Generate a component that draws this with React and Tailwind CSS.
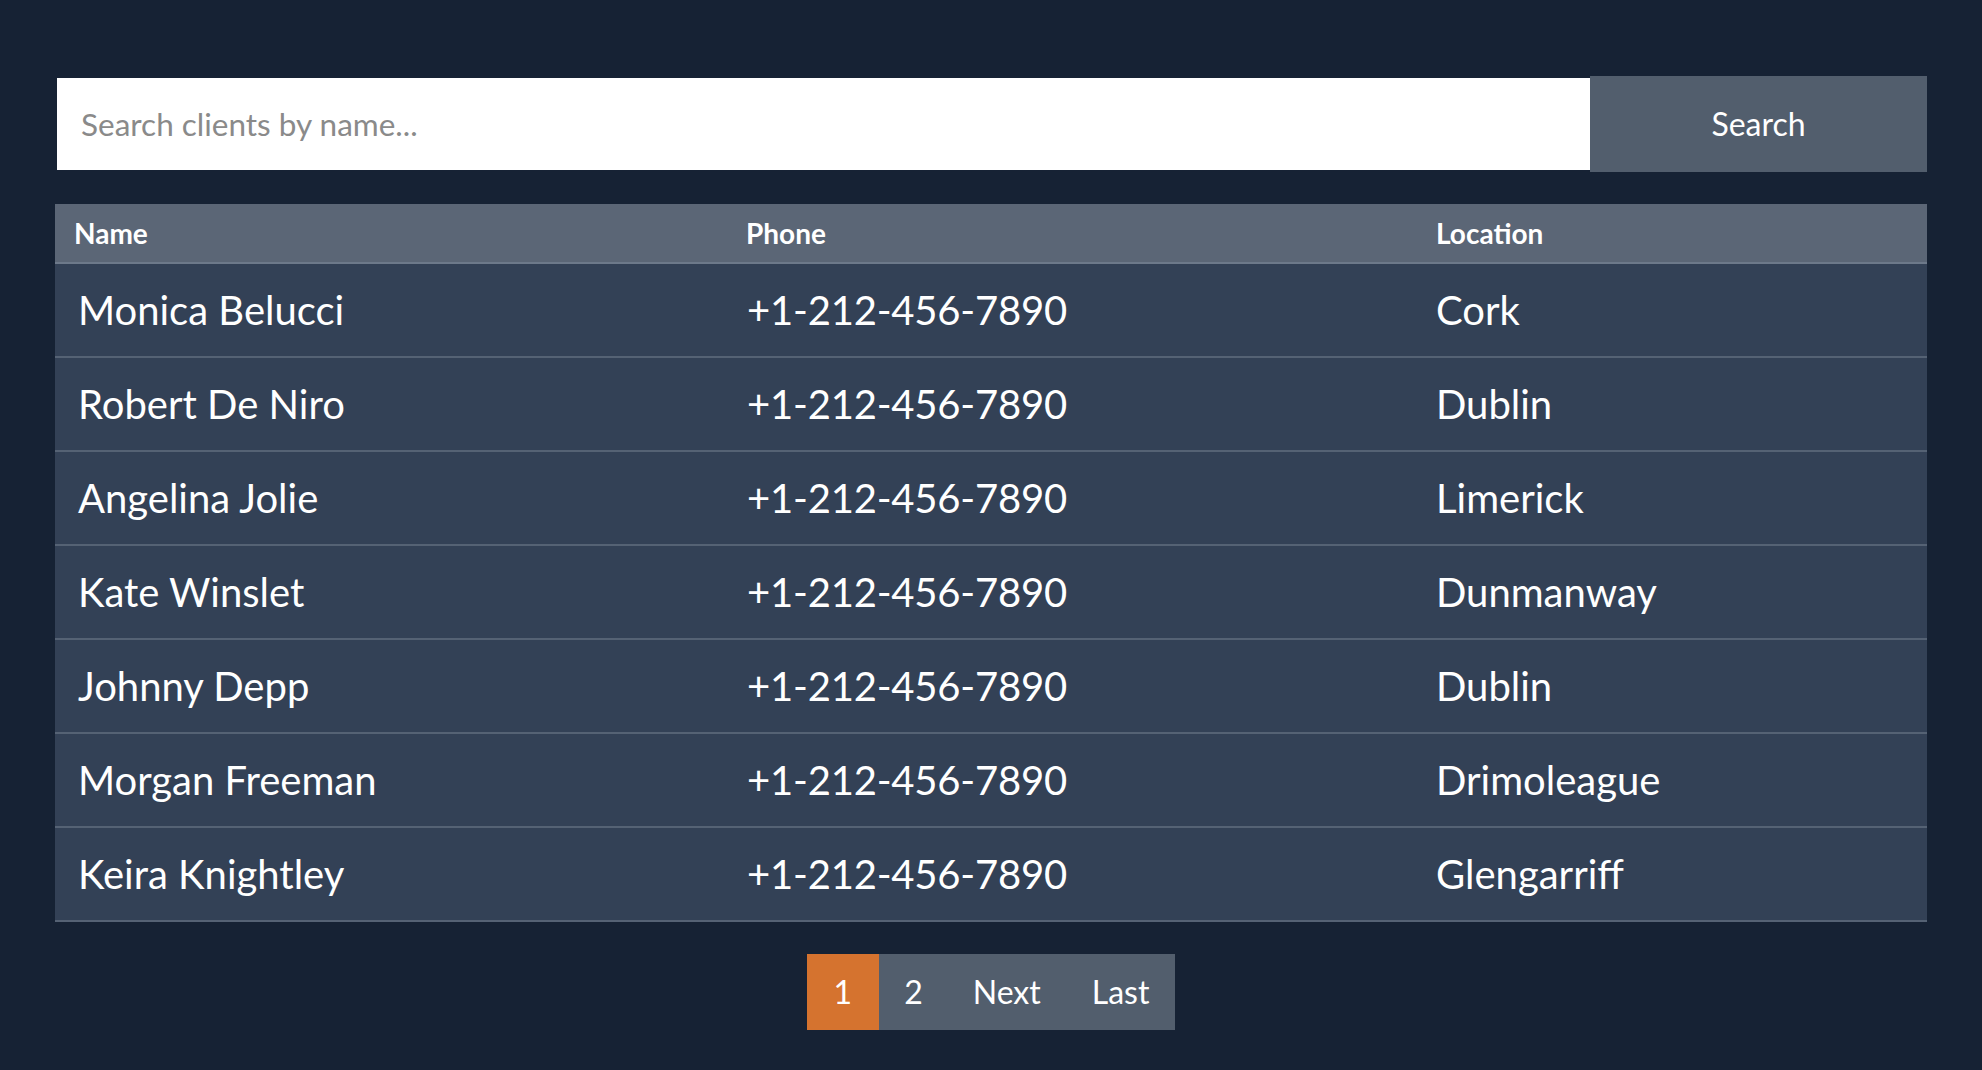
import React from 'react';

const clients = [
  { name: 'Monica Belucci', phone: '+1-212-456-7890', location: 'Cork' },
  { name: 'Robert De Niro', phone: '+1-212-456-7890', location: 'Dublin' },
  { name: 'Angelina Jolie', phone: '+1-212-456-7890', location: 'Limerick' },
  { name: 'Kate Winslet', phone: '+1-212-456-7890', location: 'Dunmanway' },
  { name: 'Johnny Depp', phone: '+1-212-456-7890', location: 'Dublin' },
  { name: 'Morgan Freeman', phone: '+1-212-456-7890', location: 'Drimoleague' },
  { name: 'Keira Knightley', phone: '+1-212-456-7890', location: 'Glengarriff' },
];

export default function App() {
  return (
    <div className="min-h-screen bg-[#162234] px-[55px] pt-[76px] pb-10 text-white font-['Lato',_'Noto_Sans',_sans-serif]">
      {/* SEARCH */}
      <form className="flex items-center" onSubmit={(e) => e.preventDefault()}>
        <input
          type="text"
          placeholder="Search clients by name..."
          className="ml-[2px] h-[92px] flex-1 bg-white px-[24px] text-[31.5px] text-gray-800 placeholder:text-[#8a8a8a] outline-none"
        />
        <button type="submit" className="h-[96px] w-[337px] bg-[#525e6d] text-[32px] text-white">
          Search
        </button>
      </form>

      {/* TABLE */}
      <div className="mt-[32px]">
        <div className="grid h-[60px] grid-cols-[673px_689px_1fr] items-center border-b-2 border-[#6d798a] bg-[#5b6676] text-[28px] font-bold">
          <div className="px-[19px]">Name</div>
          <div className="px-[18px]">Phone</div>
          <div className="px-[19px]">Location</div>
        </div>
        {clients.map((c) => (
          <div
            key={c.name + c.location}
            className="grid h-[94px] grid-cols-[673px_689px_1fr] items-center border-b-2 border-[#556274] bg-[#334156] text-[40px]"
          >
            <div className="px-[23px]">{c.name}</div>
            <div className="px-[19px] tracking-[-0.2px]">{c.phone}</div>
            <div className="px-[19px]">{c.location}</div>
          </div>
        ))}
      </div>

      {/* PAGINATION */}
      <div className="mt-[32px] flex justify-center">
        <div className="flex h-[76px] items-stretch bg-[#525e6d] text-[32px]">
          <button className="bg-[#d5732f] px-[27px]">1</button>
          <button className="px-[25px]">2</button>
          <button className="px-[25px]">Next</button>
          <button className="px-[26px]">Last</button>
        </div>
      </div>
    </div>
  );
}
